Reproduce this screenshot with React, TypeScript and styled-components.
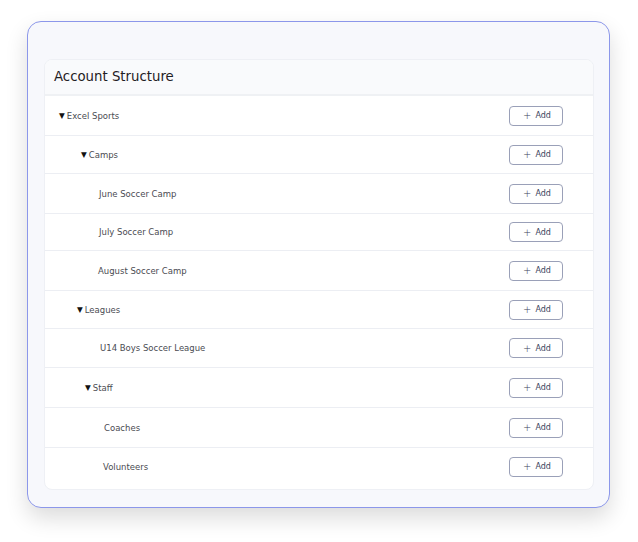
import styled, { createGlobalStyle } from "styled-components";

const GlobalStyle = createGlobalStyle`
  html, body {
    margin: 0;
    padding: 0;
    background: #ffffff;
    font-family: "DejaVu Sans", "Noto Sans", sans-serif;
  }
`;

type Node = {
  label: string;
  indent: number;
  height: number;
  branch?: boolean;
};

const nodes: Node[] = [
  { label: "Excel Sports", indent: 14, height: 40, branch: true },
  { label: "Camps", indent: 36, height: 38, branch: true },
  { label: "June Soccer Camp", indent: 54, height: 40 },
  { label: "July Soccer Camp", indent: 54, height: 37 },
  { label: "August Soccer Camp", indent: 53, height: 40 },
  { label: "Leagues", indent: 32, height: 38, branch: true },
  { label: "U14 Boys Soccer League", indent: 55, height: 39 },
  { label: "Staff", indent: 40, height: 40, branch: true },
  { label: "Coaches", indent: 59, height: 40 },
  { label: "Volunteers", indent: 58, height: 41 },
];

export default function App() {
  return (
    <>
      <GlobalStyle />
      <Page>
        <Card>
          <Panel>
            <Header>Account Structure</Header>
            {nodes.map((n) => (
              <Row key={n.label} $height={n.height}>
                <Label $indent={n.indent}>
                  {n.branch && <Caret>▼</Caret>}
                  {n.label}
                </Label>
                <AddButton>
                  <span>+</span> Add
                </AddButton>
              </Row>
            ))}
          </Panel>
        </Card>
      </Page>
    </>
  );
}

const Page = styled.div`
  padding: 21px 28px 34px 27px;
`;

const Card = styled.div`
  width: 583px;
  height: 487px;
  box-sizing: border-box;
  padding: 37px 15px 18px 16px;
  background: #f7f8fc;
  border: 1px solid #8c97ea;
  border-radius: 14px;
  box-shadow: 0 10px 22px rgba(0, 0, 0, 0.14);
`;

const Panel = styled.div`
  background: #ffffff;
  border-radius: 8px;
  overflow: hidden;
  border: 1px solid #eef0f5;
`;

const Header = styled.div`
  height: 36px;
  box-sizing: border-box;
  padding: 9px 0 0 9px;
  background: #f9fafc;
  border-bottom: 2px solid #eff1f4;
  font-size: 13.3px;
  color: #1f2024;
`;

const Row = styled.div<{ $height: number }>`
  height: ${(p) => p.$height}px;
  box-sizing: border-box;
  display: flex;
  align-items: center;
  justify-content: space-between;
  padding-right: 30px;
  border-bottom: 1px solid #eceef3;
  &:last-child {
    border-bottom: none;
    padding-bottom: 4px;
  }
`;

const Label = styled.div<{ $indent: number }>`
  padding-left: ${(p) => p.$indent}px;
  font-size: 8.5px;
  color: #4a4b52;
  display: flex;
  align-items: center;
`;

const Caret = styled.span`
  font-size: 7.5px;
  color: #111;
  margin-right: 2px;
`;

const AddButton = styled.button`
  width: 54px;
  height: 20px;
  border: 1px solid #9aa0b8;
  border-radius: 4px;
  background: #ffffff;
  font-family: "DejaVu Sans", sans-serif;
  font-size: 8px;
  color: #3b3f5c;
  padding: 0 0 0 2px;
  display: flex;
  align-items: center;
  justify-content: center;
  gap: 4px;
  span {
    font-size: 10px;
    font-weight: 300;
  }
`;
